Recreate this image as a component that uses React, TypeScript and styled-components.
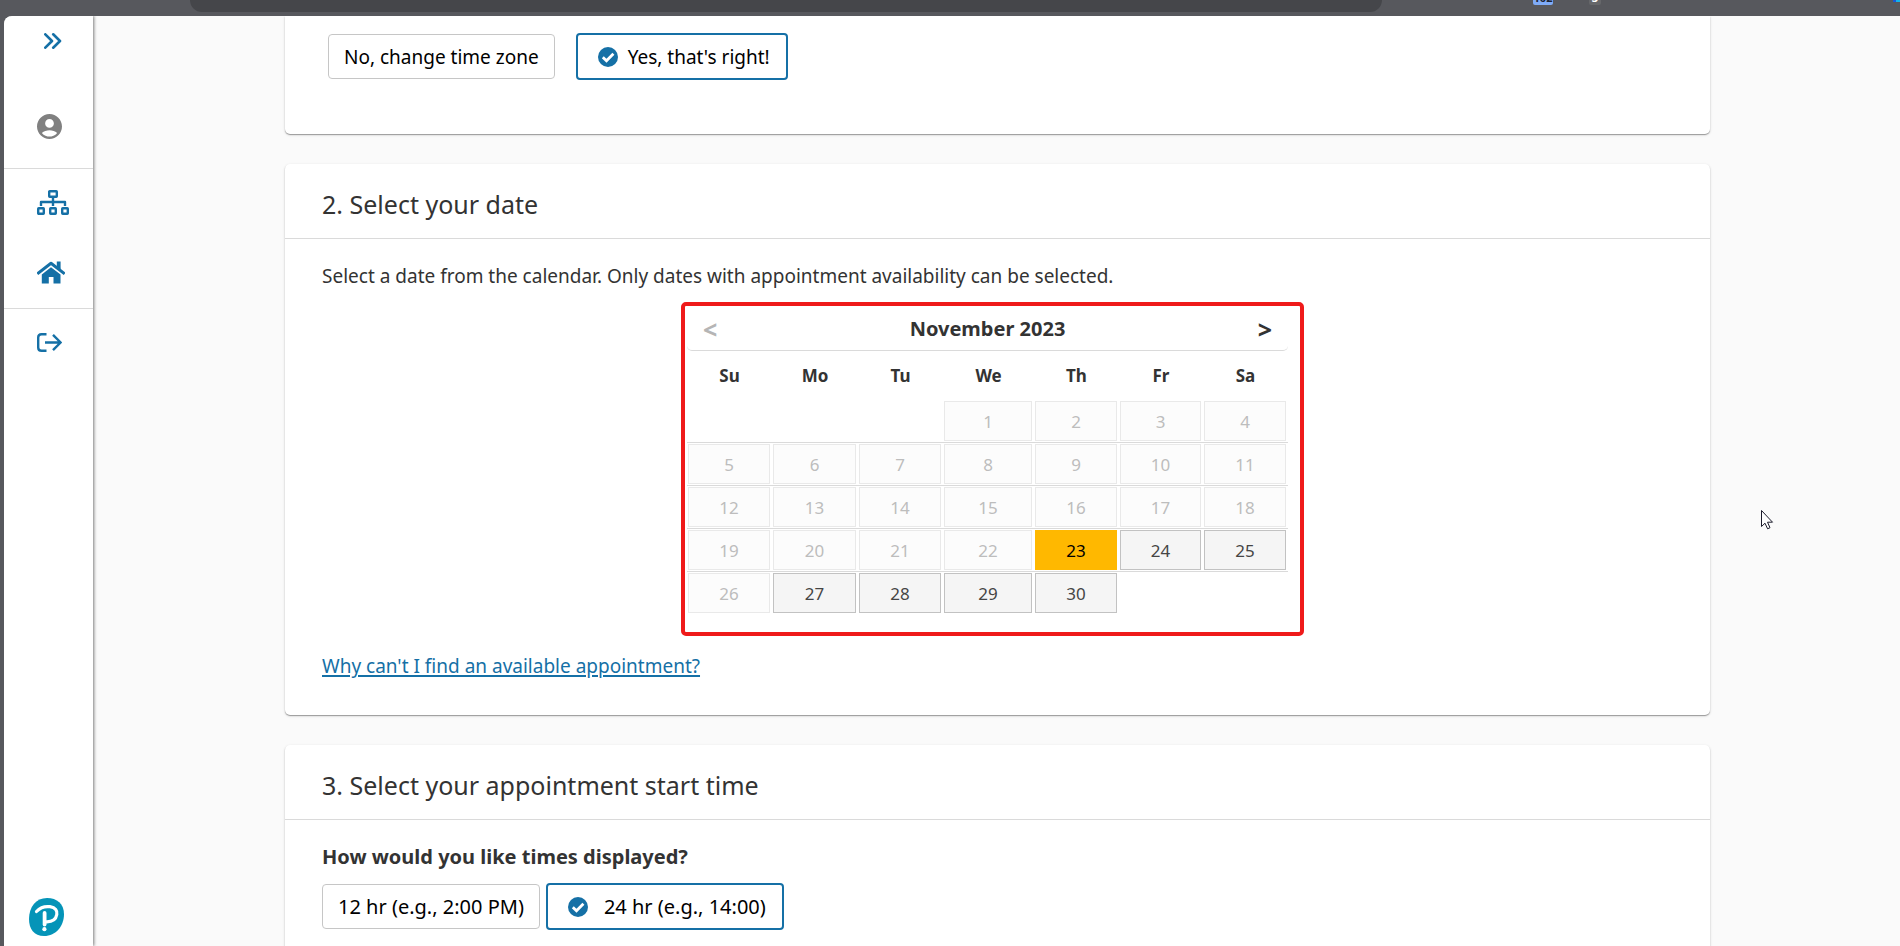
import React from 'react';
import styled, { createGlobalStyle } from 'styled-components';

const colors = {
  brand: '#1570a6',
  text: '#333333',
  line: '#dadada',
  chrome: '#57585d',
  page: '#fafafa',
};

const GlobalStyle = createGlobalStyle`
  *, *::before, *::after { box-sizing: border-box; }
  body {
    margin: 0;
    background: ${colors.chrome};
    color: ${colors.text};
    font-family: 'Noto Sans', Tahoma, sans-serif;
    font-size: 19px;
    line-height: 28px;
  }
  button { font-family: inherit; }
  svg { display: block; }
`;

const Window = styled.div`
  display: flex;
  flex-direction: column;
  height: 100vh;
  overflow: hidden;
  background: ${colors.chrome};
`;

const BrowserBar = styled.header`
  display: flex;
  flex: none;
  height: 16px;
  padding-left: 190px;
  overflow: hidden;
`;

const AddressBar = styled.div`
  flex: 1;
  height: 12px;
  border-radius: 0 0 20px 20px;
  background: #45464a;
`;

const Extensions = styled.div`
  display: flex;
  flex: none;
  align-items: flex-end;
  gap: 36px;
  width: 518px;
  height: 5px;
  padding-left: 151px;
  overflow: hidden;
`;

const Badge = styled.span<{ $muted?: boolean }>`
  width: ${(p) => (p.$muted ? 12 : 20)}px;
  height: 14px;
  border-radius: 2px;
  background: ${(p) => (p.$muted ? '#66676a' : '#7fabf7')};
  color: ${(p) => (p.$muted ? '#ffffff' : '#1c2433')};
  font-size: 11px;
  font-weight: 700;
  line-height: 14px;
  text-align: center;
`;

const ProfileDot = styled.span`
  align-self: flex-start;
  width: 7px;
  height: 2px;
  margin-left: auto;
  background: linear-gradient(90deg, #1a56d6 50%, #12b4ec 50%);
`;

const Frame = styled.div`
  display: flex;
  flex: 1;
  min-height: 0;
  margin-left: 4px;
  border-radius: 8px 0 0 0;
  overflow: hidden;
  background: ${colors.page};
`;

const Sidebar = styled.nav`
  display: flex;
  flex: none;
  flex-direction: column;
  width: 89px;
  background: #ffffff;
  box-shadow: 1px 0 3px rgba(0, 0, 0, 0.5);
  z-index: 1;
`;

const NavGroup = styled.div<{ $top: number; $bottom: number; $gap?: number; $last?: boolean }>`
  display: flex;
  flex-direction: column;
  align-items: flex-start;
  gap: ${(p) => p.$gap ?? 0}px;
  padding: ${(p) => p.$top}px 0 ${(p) => p.$bottom}px 33px;
  border-bottom: ${(p) => (p.$last ? '0' : `1px solid ${colors.line}`)};
`;

const NavButton = styled.button<{ $tone?: string }>`
  padding: 0;
  border: 0;
  background: none;
  color: ${(p) => p.$tone ?? colors.brand};
  cursor: pointer;
`;

const NavLink = styled.a`
  color: ${colors.brand};
`;

const BrandLink = styled.a`
  margin: auto 0 10px 25px;
`;

const Content = styled.main`
  display: flex;
  flex: 1;
  flex-direction: column;
  gap: 30px;
  min-width: 0;
  padding: 0 190px 0 192px;
  overflow: hidden;
`;

const Card = styled.section<{ $continued?: boolean }>`
  flex: none;
  border-radius: ${(p) => (p.$continued ? '0 0 5px 5px' : '5px')};
  background: #ffffff;
  box-shadow: 0 1px 1px rgba(0, 0, 0, 0.32), 0 1px 3px rgba(0, 0, 0, 0.14);
`;

const CardTitle = styled.h2`
  margin: 0;
  padding: 23px 37px 17px;
  border-bottom: 1px solid ${colors.line};
  font-size: 25px;
  font-weight: 400;
  line-height: 34px;
`;

const CardBody = styled.div`
  padding: 23px 47px 35px 37px;
`;

const ZoneBody = styled.div`
  padding: 17px 43px 54px;
`;

const Text = styled.p`
  margin: 0;
`;

const Question = styled.h3`
  margin: 0 0 12px;
  font-size: 20px;
  font-weight: 700;
  line-height: 28px;
`;

const Choices = styled.div<{ $gap: number }>`
  display: flex;
  align-items: center;
  gap: ${(p) => p.$gap}px;
`;

const Choice = styled.button<{ $iconGap?: number; $size?: number }>`
  display: flex;
  align-items: center;
  gap: ${(p) => p.$iconGap ?? 0}px;
  height: 45px;
  padding: 0 15px;
  border: 1px solid #c6c6c6;
  border-radius: 4px;
  background: #ffffff;
  color: #000000;
  font-size: ${(p) => p.$size ?? 19}px;
  line-height: 28px;
  white-space: nowrap;
  cursor: pointer;

  &[aria-pressed='true'] {
    height: 47px;
    padding: 0 16px 0 20px;
    border: 2px solid ${colors.brand};
  }
`;

const HelpLink = styled.a`
  display: inline-block;
  margin-top: 16px;
  color: ${colors.brand};
  text-decoration: underline;
  text-decoration-thickness: 2px;
  text-underline-offset: 2px;
`;

const Calendar = styled.div`
  width: 623px;
  margin: 12px auto 0;
  padding: 0 12px 18px 2px;
  border: 4px solid #ef1a1a;
  border-radius: 5px;
`;

const CalendarHeader = styled.div`
  display: flex;
  align-items: center;
  justify-content: space-between;
  height: 45px;
  padding: 2px 16px 0;
  border-bottom: 1px solid ${colors.line};
  border-radius: 5px;
`;

const Month = styled.strong`
  font-size: 20px;
`;

const MonthButton = styled.button`
  padding: 0;
  border: 0;
  background: none;
  color: ${colors.text};
  font-size: 25px;
  font-weight: 700;
  line-height: 28px;
  cursor: pointer;

  &:disabled {
    color: #b5b5b5;
  }
`;

const Days = styled.table`
  width: 100%;
  table-layout: fixed;
  border-spacing: 0;
  font-size: 17px;
`;

const DayColumn = styled.col<{ $width: number }>`
  width: ${(p) => p.$width}px;
`;

const Weekday = styled.th`
  height: 49px;
  padding: 0;
  font-weight: 700;
`;

const DayCell = styled.td<{ $ruled: boolean }>`
  padding: 1px 2px 1px 1px;
  border-top: ${(p) => (p.$ruled ? `1px solid ${colors.line}` : '0')};
`;

const Day = styled.button`
  display: block;
  width: 100%;
  height: 40px;
  padding: 2px 0 0;
  border: 1px solid #c2c2c2;
  background: #f5f5f5;
  color: #454545;
  font-size: 17px;
  line-height: 28px;
  cursor: pointer;

  &:disabled {
    border-color: #e9e9e9;
    background: #fcfcfc;
    color: #bdbdbd;
  }

  &[aria-pressed='true'] {
    border-color: #ffb800;
    background: #ffb800;
    color: #000000;
  }
`;

const Pointer = styled.svg`
  position: absolute;
  left: 1761px;
  top: 510px;
  z-index: 2;
`;

const CheckIcon = () => (
  <svg width="20" height="20" viewBox="0 0 20 20" aria-hidden="true">
    <circle cx="10" cy="10" r="10" fill={colors.brand} />
    <path d="M4.8 10.2l3.7 3.6 6.9-7" fill="none" stroke="#fff" strokeWidth="2.8" />
  </svg>
);

const ExpandIcon = () => (
  <svg width="25" height="16" viewBox="0 0 25 16" fill="none" stroke="currentColor" strokeWidth="2.6" strokeLinecap="round" strokeLinejoin="round">
    <path d="M8.300 1.300L15 8l-6.700 6.700M16.200 1.300L23 8l-6.800 6.700" />
  </svg>
);

const AccountIcon = () => (
  <svg width="25" height="25" viewBox="2 2 20 20" fill="currentColor">
    <path d="M12 2C6.480 2 2 6.480 2 12s4.480 10 10 10 10-4.480 10-10S17.520 2 12 2zm0 4c1.930 0 3.500 1.570 3.500 3.500S13.930 13 12 13s-3.500-1.570-3.500-3.500S10.070 6 12 6zm0 14c-2.030 0-4.430-.820-6.140-2.880C7.550 15.800 9.680 15 12 15s4.450.800 6.140 2.120C16.430 19.180 14.030 20 12 20z" />
  </svg>
);

const SitemapIcon = () => (
  <svg width="32" height="25" viewBox="0 0 32 25" fill="none" stroke="currentColor" strokeWidth="2.4">
    <rect x="12.200" y="1.200" width="7.600" height="5.600" rx="0.5" />
    <rect x="1.200" y="18.200" width="5.600" height="5.600" rx="0.5" />
    <rect x="13.200" y="18.200" width="5.600" height="5.600" rx="0.5" />
    <rect x="25.200" y="18.200" width="5.600" height="5.600" rx="0.5" />
    <path d="M16 7v9M4 16v-4h24v4" strokeLinejoin="round" />
  </svg>
);

const HomeIcon = () => (
  <svg width="28" height="23" viewBox="0 0 28 23" fill="currentColor">
    <path d="M19.800 .5H23.600V9L19.800 6z" />
    <path d="M1.500 12L14 2.200l12.500 9.800" fill="none" stroke="currentColor" strokeWidth="3" strokeLinecap="square" strokeLinejoin="round" />
    <path d="M14 6.200L23.500 13.500V22.500H16.500V16H11.800V22.500H4.800V13.500z" />
  </svg>
);

const SignOutIcon = () => (
  <svg width="25" height="19" viewBox="0 0 25 19" fill="none" stroke="currentColor" strokeWidth="2.400">
    <path d="M9.500 1.200H4.500Q1.200 1.200 1.200 4.500v10Q1.200 17.800 4.500 17.800h5M8 9.500h16M16 1.800l7.600 7.700L16 17.200" />
  </svg>
);

const BrandLogo = () => (
  <svg width="35" height="38" viewBox="0 0 35 38" fill="none" stroke="#fff" strokeLinecap="round">
    <path d="M18 0C28 0 35 6 35 16 35 28 27 38 15 38 5 38 0 31 0 21 0 9 7 0 18 0z" fill="#0594b8" stroke="none" />
    <path d="M7.500 13.500C11 9.800 16 8 21 8.700 26.500 9.500 28.500 12.500 27.800 16.500 26.800 22 22 24 17 23.800" strokeWidth="3.200" />
    <path d="M15.600 15v11.500" strokeWidth="3.800" />
    <circle cx="15.400" cy="31.200" r="2.100" fill="#fff" stroke="none" />
  </svg>
);

const weekdays = [
  { label: 'Su', name: 'Sunday', width: 85 },
  { label: 'Mo', name: 'Monday', width: 86 },
  { label: 'Tu', name: 'Tuesday', width: 85 },
  { label: 'We', name: 'Wednesday', width: 91 },
  { label: 'Th', name: 'Thursday', width: 85 },
  { label: 'Fr', name: 'Friday', width: 84 },
  { label: 'Sa', name: 'Saturday', width: 85 },
];

const firstWeekday = 3;
const daysInMonth = 30;
const selectedDay = 23;
const isAvailable = (day: number) => day >= 23 && day !== 26;

const weeks = Array.from({ length: 5 }, (_, week) =>
  Array.from({ length: 7 }, (_, column) => {
    const day = week * 7 + column - firstWeekday + 1;
    return day >= 1 && day <= daysInMonth ? day : null;
  }),
);

const DatePicker = () => (
  <Calendar>
    <CalendarHeader>
      <MonthButton disabled aria-label="Previous month">&lt;</MonthButton>
      <Month>November 2023</Month>
      <MonthButton aria-label="Next month">&gt;</MonthButton>
    </CalendarHeader>
    <Days>
      <colgroup>
        {weekdays.map((d) => (
          <DayColumn key={d.label} $width={d.width} />
        ))}
      </colgroup>
      <thead>
        <tr>
          {weekdays.map((d) => (
            <Weekday key={d.label} scope="col" abbr={d.name}>
              {d.label}
            </Weekday>
          ))}
        </tr>
      </thead>
      <tbody>
        {weeks.map((week, row) => (
          <tr key={row}>
            {week.map((day, column) => (
              <DayCell key={column} $ruled={row > 0}>
                {day && (
                  <Day disabled={!isAvailable(day)} aria-pressed={day === selectedDay}>
                    {day}
                  </Day>
                )}
              </DayCell>
            ))}
          </tr>
        ))}
      </tbody>
    </Days>
  </Calendar>
);

export default function App() {
  return (
    <Window>
      <GlobalStyle />
      <BrowserBar>
        <AddressBar />
        <Extensions>
          <Badge>102</Badge>
          <Badge $muted>3</Badge>
          <ProfileDot />
        </Extensions>
      </BrowserBar>
      <Frame>
        <Sidebar aria-label="Main">
          <NavGroup $top={17} $bottom={29} $gap={65}>
            <NavButton aria-label="Expand menu">
              <ExpandIcon />
            </NavButton>
            <NavButton aria-label="Account" $tone="#808080">
              <AccountIcon />
            </NavButton>
          </NavGroup>
          <NavGroup $top={21} $bottom={24} $gap={46}>
            <NavLink href="#sitemap" aria-label="Site map">
              <SitemapIcon />
            </NavLink>
            <NavLink href="#home" aria-label="Home">
              <HomeIcon />
            </NavLink>
          </NavGroup>
          <NavGroup $top={24} $bottom={24} $last>
            <NavLink href="#sign-out" aria-label="Sign out">
              <SignOutIcon />
            </NavLink>
          </NavGroup>
          <BrandLink href="#about" aria-label="Pearson">
            <BrandLogo />
          </BrandLink>
        </Sidebar>
        <Content>
          <Card $continued>
            <ZoneBody>
              <Choices $gap={21}>
                <Choice aria-pressed={false}>No, change time zone</Choice>
                <Choice aria-pressed $iconGap={10}>
                  <CheckIcon />
                  Yes, that's right!
                </Choice>
              </Choices>
            </ZoneBody>
          </Card>
          <Card>
            <CardTitle>2. Select your date</CardTitle>
            <CardBody>
              <Text>Select a date from the calendar. Only dates with appointment availability can be selected.</Text>
              <DatePicker />
              <HelpLink href="#availability">Why can't I find an available appointment?</HelpLink>
            </CardBody>
          </Card>
          <Card>
            <CardTitle>3. Select your appointment start time</CardTitle>
            <CardBody>
              <Question>How would you like times displayed?</Question>
              <Choices $gap={6}>
                <Choice aria-pressed={false} $size={20}>12 hr (e.g., 2:00 PM)</Choice>
                <Choice aria-pressed $size={20} $iconGap={16}>
                  <CheckIcon />
                  24 hr (e.g., 14:00)
                </Choice>
              </Choices>
            </CardBody>
          </Card>
        </Content>
      </Frame>
      <Pointer width="13" height="20" viewBox="0 0 13 20" aria-hidden="true">
        <path d="M.5.5v16l3.500-3.300 2.600 5.600 2.400-1.100-2.500-5.500h5z" fill="#fff" stroke="#1b1b2b" />
      </Pointer>
    </Window>
  );
}
